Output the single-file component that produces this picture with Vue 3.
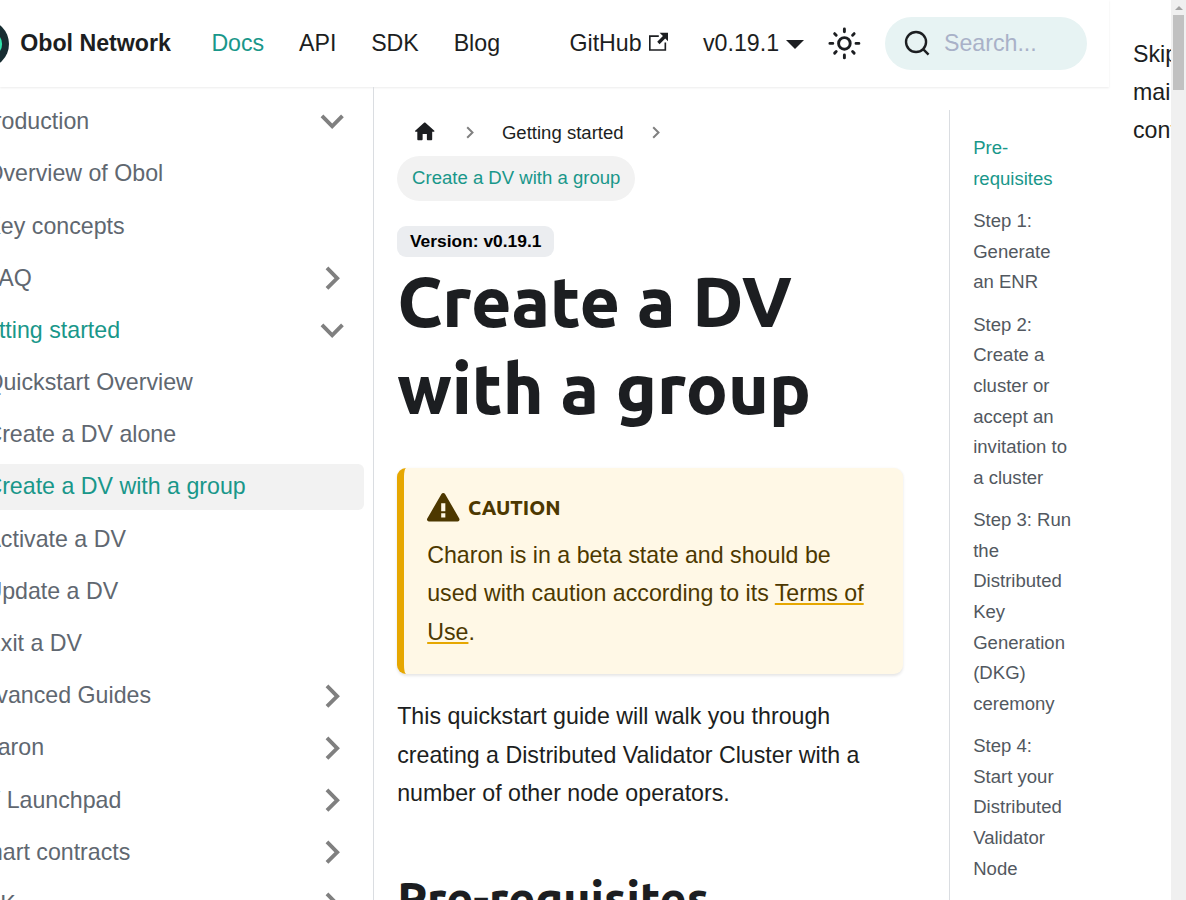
<script setup>
const menu = [
  { label: 'Introduction', level: 1, caret: 'down' },
  { label: 'Overview of Obol', level: 2 },
  { label: 'Key concepts', level: 2 },
  { label: 'FAQ', level: 2, caret: 'right' },
  { label: 'Getting started', level: 1, caret: 'down', current: true },
  { label: 'Quickstart Overview', level: 2 },
  { label: 'Create a DV alone', level: 2 },
  { label: 'Create a DV with a group', level: 2, current: true, active: true },
  { label: 'Activate a DV', level: 2 },
  { label: 'Update a DV', level: 2 },
  { label: 'Exit a DV', level: 2 },
  { label: 'Advanced Guides', level: 1, caret: 'right' },
  { label: 'Charon', level: 1, caret: 'right' },
  { label: 'DV Launchpad', level: 1, caret: 'right' },
  { label: 'Smart contracts', level: 1, caret: 'right' },
  { label: 'SDK', level: 1, caret: 'right' },
]
const toc = [
  'Pre-requisites',
  'Step 1: Generate an ENR',
  'Step 2: Create a cluster or accept an invitation to a cluster',
  'Step 3: Run the Distributed Key Generation (DKG) ceremony',
  'Step 4: Start your Distributed Validator Node',
]
</script>

<template>
  <div class="page">
    <div class="site">
      <header class="navbar">
        <svg class="logo" viewBox="0 0 48 48">
          <circle cx="24" cy="24" r="24" fill="#182d32" />
          <circle cx="28.5" cy="24" r="12.6" fill="#2fe4ab" />
          <circle cx="24" cy="24" r="8" fill="#182d32" />
        </svg>
        <b class="brand">Obol Network</b>
        <nav class="links">
          <a class="link current">Docs</a>
          <a class="link">API</a>
          <a class="link">SDK</a>
          <a class="link">Blog</a>
        </nav>
        <a class="link github">GitHub<svg class="ext" viewBox="0 0 24 24"><path fill="currentColor" d="M21 13v10h-21v-19h12v2h-10v15h17v-8h2zm3-12h-10.988l4.035 4-6.977 7.07 2.828 2.828 6.977-7.07 4.125 4.172v-11z" /></svg></a>
        <a class="link">v0.19.1<i class="drop"></i></a>
        <span class="toggle">
          <svg viewBox="0 0 24 24" fill="none" stroke="currentColor" stroke-width="2" stroke-linecap="round">
            <circle cx="12" cy="12" r="4" />
            <path d="M2 12h2M20 12h2M12 2v2M12 20v2M5.28 5.28l1.07 1.07M17.65 17.65l1.07 1.07M5.28 18.72l1.07-1.07M17.65 6.35l1.07-1.07" />
          </svg>
        </span>
        <div class="search">
          <svg viewBox="0 0 20 20" fill="none" stroke="currentColor" stroke-width="1.8" stroke-linecap="round"><path d="M14.386 14.386l4.0877 4.0877-4.0877-4.0877c-2.9418 2.9418-7.7115 2.9418-10.6533 0-2.9419-2.9418-2.9419-7.7115 0-10.6533 2.9418-2.9419 7.7115-2.9419 10.6533 0 2.9419 2.9418 2.9419 7.7115 0 10.6533z" /></svg>
          <span>Search...</span>
        </div>
      </header>

      <div class="body">
        <aside class="sidebar">
          <div
            v-for="item in menu"
            :key="item.label"
            class="item"
            :class="{ nested: item.level === 2, current: item.current, active: item.active }"
          >
            <span>{{ item.label }}</span>
            <svg v-if="item.caret" class="caret" :class="item.caret" viewBox="0 0 24 24"><path fill="#808080" d="M7.41 15.41L12 10.83l4.59 4.58L18 14l-6-6-6 6z" /></svg>
          </div>
        </aside>

        <main class="doc">
          <div class="crumbs">
            <span class="crumb"><svg class="home" viewBox="0 0 24 24"><path fill="currentColor" d="M10 19v-5h4v5c0 .55.45 1 1 1h3c.55 0 1-.45 1-1v-7h1.7c.46 0 .68-.57.33-.87L12.67 3.6c-.38-.34-.96-.34-1.34 0l-8.36 7.53c-.34.3-.13.87.33.87H5v7c0 .55.45 1 1 1h3c.55 0 1-.45 1-1z" /></svg></span>
            <svg class="sep" viewBox="0 0 9 13"><path d="M1.2 1.2l5.3 5.3-5.3 5.3" fill="none" stroke="#808080" stroke-width="2" /></svg>
            <span class="crumb">Getting started</span>
            <svg class="sep" viewBox="0 0 9 13"><path d="M1.2 1.2l5.3 5.3-5.3 5.3" fill="none" stroke="#808080" stroke-width="2" /></svg>
            <span class="crumb here">Create a DV with a group</span>
          </div>
          <span class="badge">Version: v0.19.1</span>
          <h1>Create a DV with a group</h1>
          <section class="caution">
            <div class="caution-title">
              <svg viewBox="0 0 16 16"><path fill="currentColor" fill-rule="evenodd" d="M8.893 1.5c-.183-.31-.52-.5-.887-.5s-.703.19-.886.5L.138 13.499a.98.98 0 0 0 0 1.001c.193.31.53.501.886.501h13.964c.367 0 .704-.19.877-.5a1.03 1.03 0 0 0 .01-1.002L8.893 1.5zm.133 11.497H6.987v-2.003h2.039v2.003zm0-3.004H6.987V5.987h2.039v4.006z" /></svg>
              <span>CAUTION</span>
            </div>
            <p>Charon is in a beta state and should be used with caution according to its <a>Terms of Use</a>.</p>
          </section>
          <p class="intro">This quickstart guide will walk you through creating a Distributed Validator Cluster with a number of other node operators.</p>
          <h2>Pre-requisites</h2>
        </main>

        <aside class="toc">
          <a v-for="(t, i) in toc" :key="t" :class="{ current: i === 0 }">{{ t }}</a>
        </aside>
      </div>
    </div>

    <div class="skip"><div>Skip to main content</div></div>
    <div class="scrollbar"><i class="up"></i><i class="thumb"></i></div>
  </div>
</template>

<style>
html, body { overflow: hidden; background: #fff; }
</style>

<style scoped>
.page {
  display: flex;
  width: 1186px;
  height: 900px;
  overflow: hidden;
  background: #fff;
  color: #1c1e21;
  font: 23.2px/1.65 "Liberation Sans", Arial, sans-serif;
}
.page * { box-sizing: border-box; }
svg { display: block; flex: none; }
p, h1, h2 { margin: 0; }
.site { width: 1109px; flex: none; height: 900px; }
.navbar {
  display: flex;
  align-items: center;
  height: 87px;
  box-shadow: 0 1px 2px rgba(0, 0, 0, 0.08);
  white-space: nowrap;
}
.logo { width: 48px; height: 48px; margin-left: -39px; margin-right: 11.2px; }
.brand { width: 173.8px; }
.links { display: flex; flex: none; width: 358.1px; }
.link { display: flex; align-items: center; padding: 0 17.4px; }
.current { color: #19978a; }
.ext { width: 19.6px; height: 19.6px; margin: -3px 0 0 7px; }
.drop {
  margin: 2px 0 0 7px;
  border: 9.28px solid transparent;
  border-top-color: currentColor;
  border-bottom: 0;
}
.toggle { display: flex; width: 46.4px; justify-content: center; }
.toggle svg { width: 34.8px; height: 34.8px; }
.search {
  display: flex;
  align-items: center;
  flex: none;
  width: 202px;
  height: 53px;
  margin-left: 16.8px;
  padding-left: 19.6px;
  border-radius: 27px;
  background: #e7f3f3;
  color: #1c1e21;
}
.search svg { width: 26.6px; height: 26.6px; }
.search span { margin-left: 13.1px; color: #a9b1c8; }
.body { display: flex; height: 813px; }
.sidebar {
  flex: none;
  width: 374px;
  padding: 11.48px 9px 0 0;
  border-right: 1px solid #dadde1;
  color: #606770;
  overflow: hidden;
}
.item {
  display: flex;
  align-items: center;
  justify-content: space-between;
  height: 46.4px;
  margin: 0 0 5.8px -49.4px;
  padding-left: 17.4px;
  border-radius: 5.8px;
  line-height: 29px;
  white-space: nowrap;
}
.item.nested { margin-left: -32px; }
.item.current { color: #19978a; }
.item.active { background: #f2f2f2; }
.caret { width: 46.4px; height: 46.4px; margin-right: 8.2px; }
.caret.down { transform: rotate(180deg); }
.caret.right { transform: rotate(90deg); }
.doc { width: 530px; flex: none; padding: 23.2px 0 0 23.2px; }
.crumbs {
  display: flex;
  flex-wrap: wrap;
  align-items: center;
  width: 330px;
  font-size: 18.56px;
  line-height: 30.6px;
}
.crumb { display: flex; align-items: center; height: 45.4px; padding: 0 14.9px; border-radius: 23px; }
.crumb.here { background: #f2f2f2; color: #19978a; }
.home { width: 25.5px; height: 25.5px; margin-top: -2px; }
.sep { width: 9px; height: 13px; margin: 0 12.4px 0 13.2px; }
.badge {
  display: block;
  width: 157px;
  height: 31px;
  margin: 25px 0 1px;
  border-radius: 9px;
  background: #ebedf0;
  color: #000;
  font-size: 17.4px;
  font-weight: 700;
  line-height: 30px;
  text-align: center;
}
h1 {
  font: 800 69.6px/87px Ubuntu, "Noto Sans", sans-serif;
  margin-bottom: 36px;
}
.caution {
  width: 506.2px;
  height: 206px;
  padding: 23px;
  border-left: 7px solid #e6a700;
  border-radius: 9px;
  background: #fff8e6;
  color: #4d3800;
  box-shadow: 0 1.5px 3px rgba(0, 0, 0, 0.1);
}
.caution-title {
  display: flex;
  align-items: center;
  height: 33px;
  margin-bottom: 12px;
  font: 800 20.3px/25px Ubuntu, "Noto Sans", sans-serif;
}
.caution-title svg { width: 32.5px; height: 32.5px; margin-right: 8.4px; }
.caution a { text-decoration: underline #e6a700 2px; text-underline-offset: 2.4px; }
.intro { margin-top: 23.5px; }
h2 {
  margin-top: 56.5px;
  font: 800 46.4px/58px Ubuntu, "Noto Sans", sans-serif;
}
.toc {
  width: 126px;
  height: 790px;
  margin: 23px 0 0 45px;
  padding: 23.3px 0 0 23.2px;
  border-left: 1px solid #dadde1;
  color: #525860;
  font-size: 18.56px;
  line-height: 30.64px;
}
.toc a { display: block; margin-bottom: 11.6px; }
.toc .current { color: #19978a; }
.skip { width: 62px; flex: none; padding: 34.6px 0 0 24px; overflow: hidden; }
.skip div { width: 82px; }
.scrollbar { display: flex; flex-direction: column; align-items: center; width: 15px; height: 900px; background: #f0f0f0; }
.up { margin-top: 6px; border: 4px solid transparent; border-top: 0; border-bottom-color: #a3a3a3; }
.thumb { width: 11px; height: 75px; margin-top: 5px; background: #c1c1c1; }
</style>
